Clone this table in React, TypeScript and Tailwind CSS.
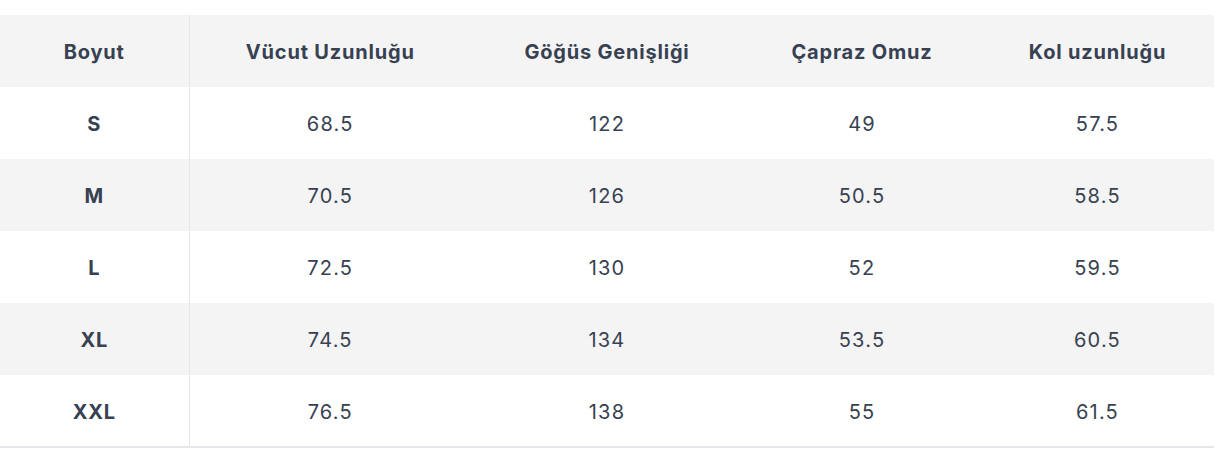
const headers = ["Boyut", "Vücut Uzunluğu", "Göğüs Genişliği", "Çapraz Omuz", "Kol uzunluğu"];

const rows: string[][] = [
  ["S", "68.5", "122", "49", "57.5"],
  ["M", "70.5", "126", "50.5", "58.5"],
  ["L", "72.5", "130", "52", "59.5"],
  ["XL", "74.5", "134", "53.5", "60.5"],
  ["XXL", "76.5", "138", "55", "61.5"],
];

const App = () => {
  return (
    <div className="min-h-[450px] w-full bg-white pt-[15px] font-['Inter','Liberation_Sans',sans-serif] text-[#374151]">
      <table className="w-[1214px] table-fixed border-collapse border-b-2 border-[#e5e7eb] text-center text-[20px] tracking-[0.06em]">
        <colgroup>
          <col className="w-[189px]" />
          <col className="w-[282px]" />
          <col className="w-[272px]" />
          <col className="w-[238px]" />
          <col className="w-[233px]" />
        </colgroup>
        <thead>
          <tr className="h-[72px] bg-[#f4f4f5]">
            {headers.map((h, i) => (
              <th
                key={h}
                className={`pt-[2px] font-bold tracking-[0.04em] ${i === 0 ? "border-r border-[#e5e7eb]" : ""}`}
              >
                {h}
              </th>
            ))}
          </tr>
        </thead>
        <tbody>
          {rows.map((row, r) => (
            <tr key={row[0]} className={`h-[72px] ${r % 2 === 1 ? "bg-[#f4f4f5]" : "bg-white"}`}>
              {row.map((cell, i) => (
                <td
                  key={i}
                  className={`pt-[2px] ${i === 0 ? "border-r border-[#e5e7eb] font-bold tracking-[0.04em]" : "font-normal"}`}
                >
                  {cell}
                </td>
              ))}
            </tr>
          ))}
        </tbody>
      </table>
    </div>
  );
};

export default App;
